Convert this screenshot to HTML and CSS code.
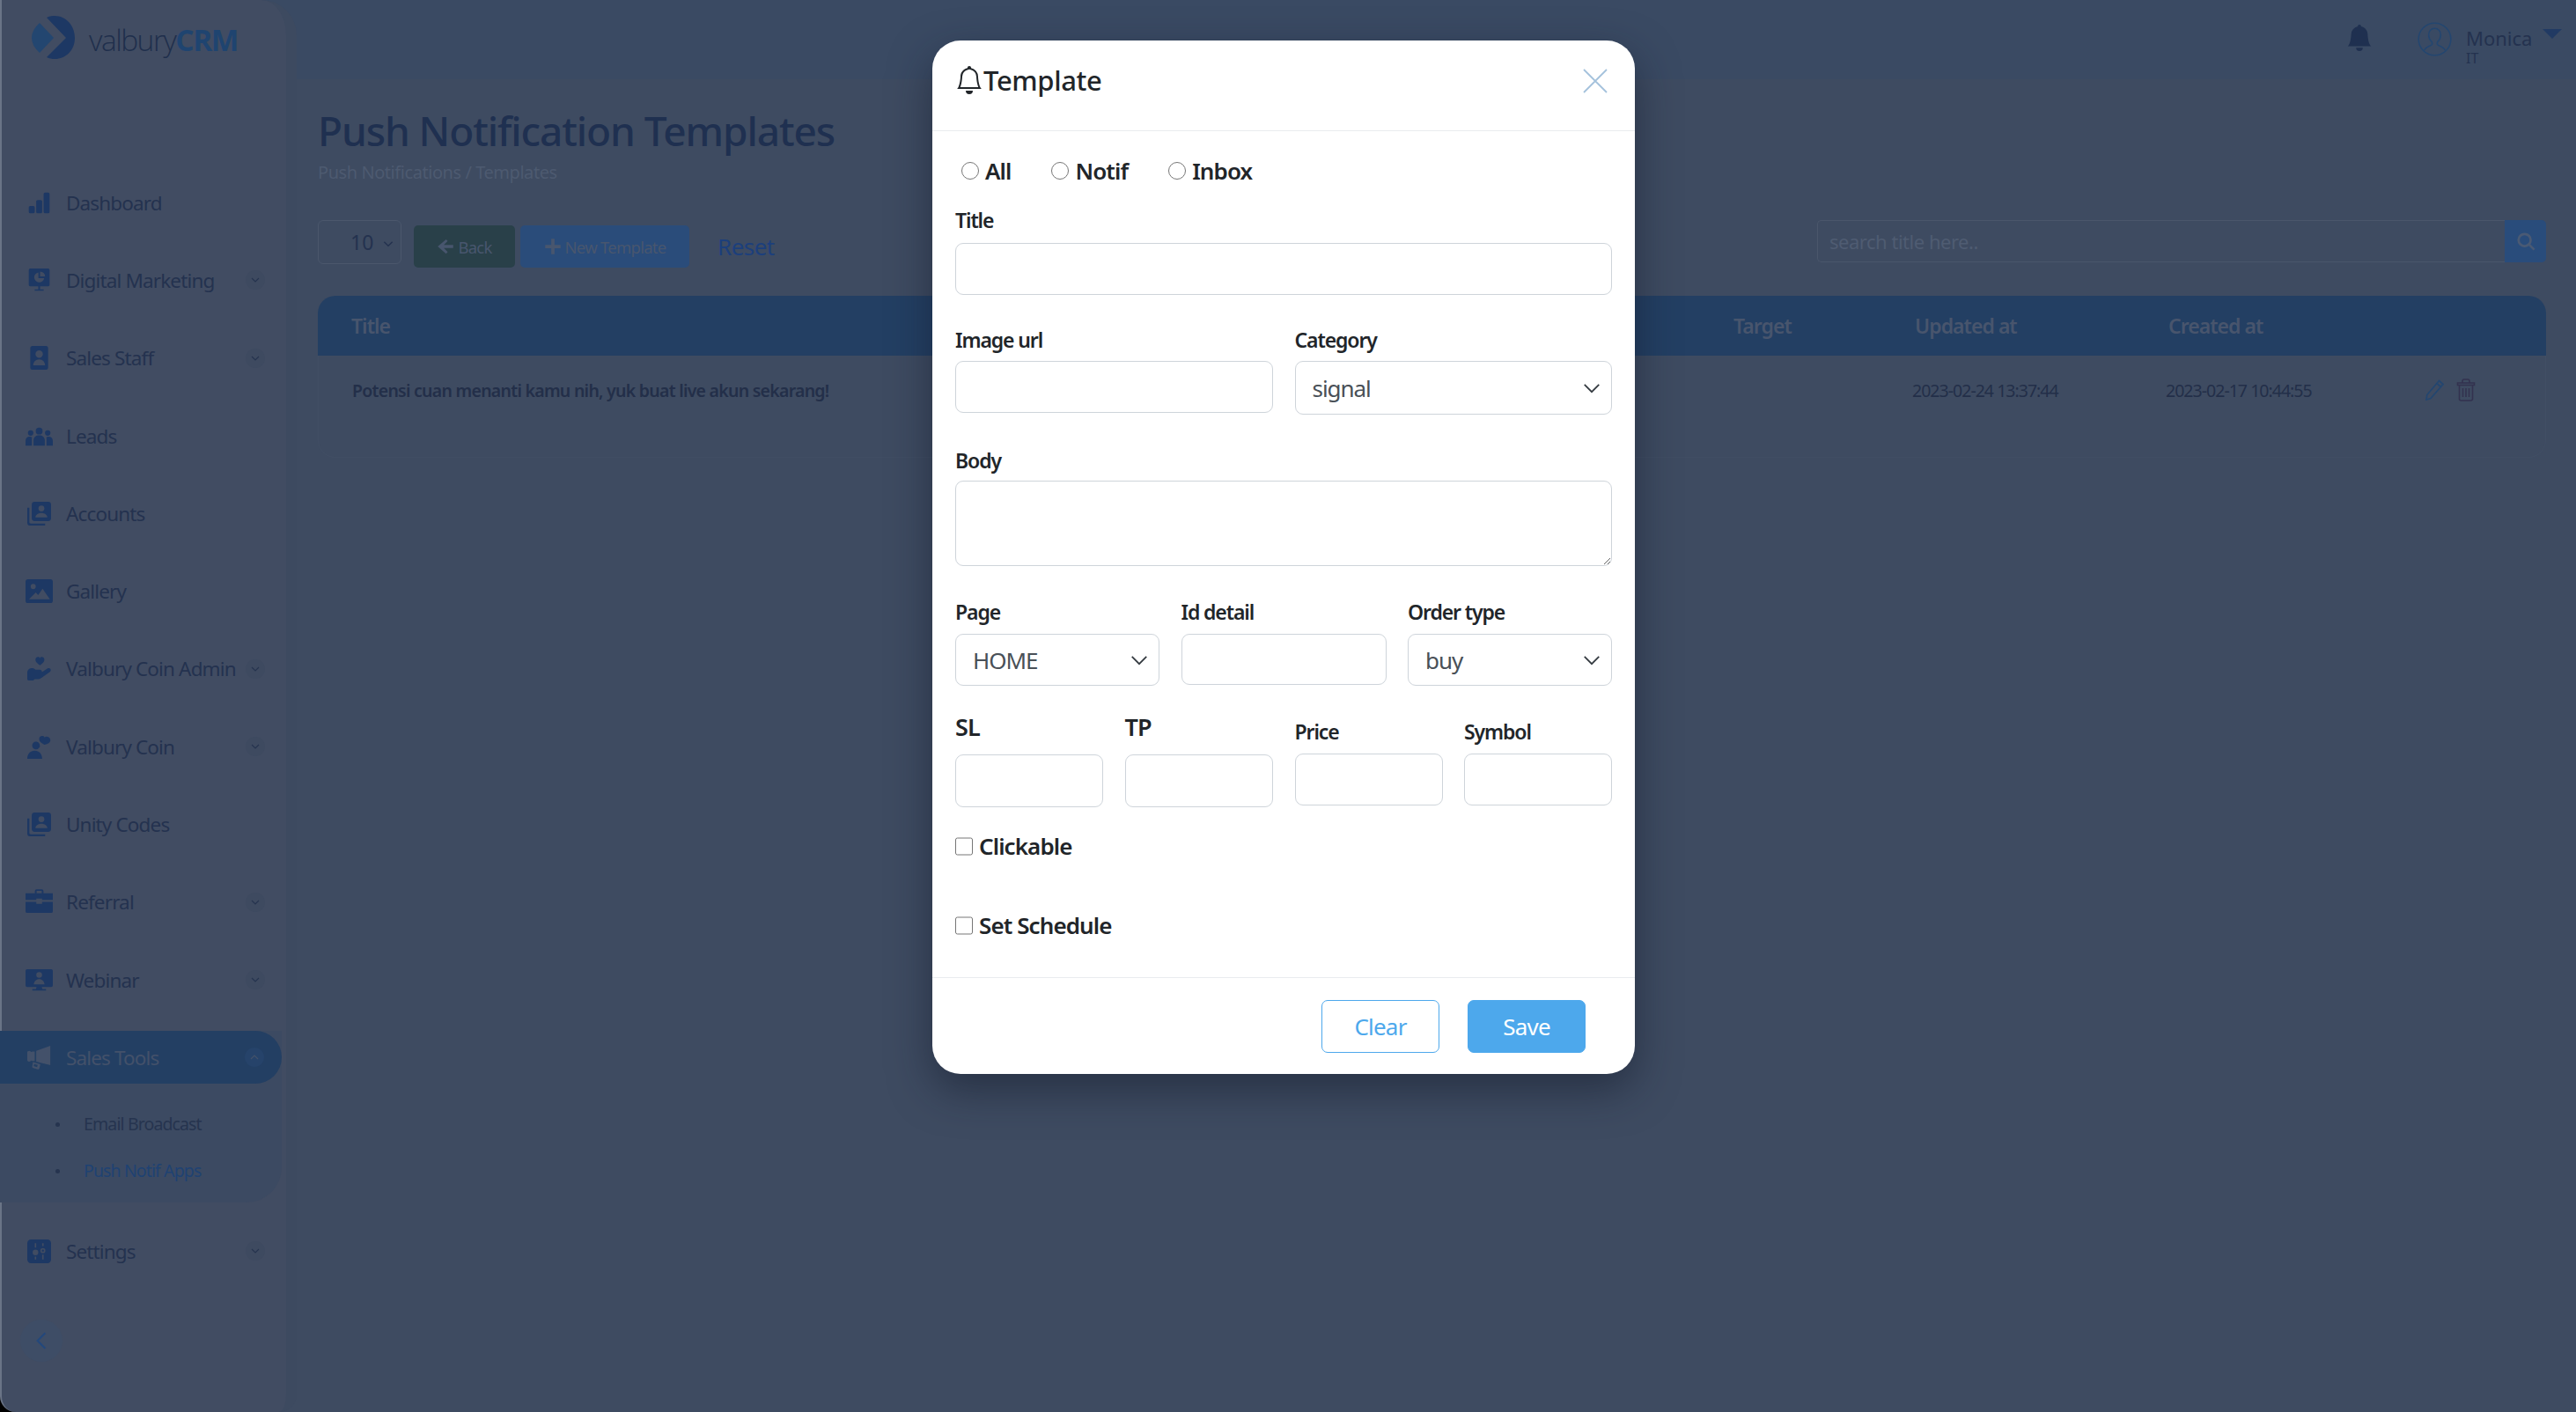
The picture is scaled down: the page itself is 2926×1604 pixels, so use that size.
FILE: index.html
```html
<!DOCTYPE html>
<html lang="en">
<head>
<meta charset="utf-8">
<title>Push Notification Templates</title>
<link rel="stylesheet" href="styles.css">
</head>
<body>
<div class="app">
  <aside class="sidebar">
    <div class="logo">
      <svg class="logo-mark" viewBox="0 0 50 49"><path class="logo-a" d="M10 8 L26 25 L10 42 Q1 34 1 25 Q1 16 10 8Z"/><path class="logo-b" d="M18 2 C22 0 25 0 27 0 C40 0 50 11 50 25 C50 39 40 49 27 49 C24 49 21 48.500 18 47 L40 25Z"/></svg>
      <span class="logo-text">valbury<b>CRM</b></span>
    </div>
    <nav class="nav">
      <a class="nav-item"><svg class="nav-icon" viewBox="0 0 16 16"><path d="M1 11a1 1 0 0 1 1-1h2a1 1 0 0 1 1 1v3a1 1 0 0 1-1 1H2a1 1 0 0 1-1-1v-3zm5-4a1 1 0 0 1 1-1h2a1 1 0 0 1 1 1v7a1 1 0 0 1-1 1H7a1 1 0 0 1-1-1V7zm5-5a1 1 0 0 1 1-1h2a1 1 0 0 1 1 1v12a1 1 0 0 1-1 1h-2a1 1 0 0 1-1-1V2z"/></svg><span>Dashboard</span></a>
      <a class="nav-item"><svg class="nav-icon" viewBox="0 0 16 16"><path fill-rule="evenodd" d="M2 0h12a1 1 0 0 1 1 1v10a1 1 0 0 1-1 1H8.600v2H11v1H5v-1h2.400v-2H2a1 1 0 0 1-1-1V1a1 1 0 0 1 1-1zm5.500 2.600a3.400 3.400 0 1 0 3.900 3.900H7.500zM8.600 2v3.400H12A3.400 3.400 0 0 0 8.600 2z"/></svg><span>Digital Marketing</span><i class="chev"><svg viewBox="0 0 12 12"><path d="M2 4l4 4 4-4"/></svg></i></a>
      <a class="nav-item"><svg class="nav-icon" viewBox="0 0 16 16"><path fill-rule="evenodd" d="M3.500 0h9A1.500 1.500 0 0 1 14 1.500v13a1.500 1.500 0 0 1-1.500 1.500h-9A1.500 1.500 0 0 1 2 14.500v-13A1.500 1.500 0 0 1 3.500 0zM8 3a2.500 2.500 0 1 0 0 5 2.500 2.500 0 0 0 0-5zM4 13h8c0-2-1.500-4-4-4s-4 2-4 4z"/></svg><span>Sales Staff</span><i class="chev"><svg viewBox="0 0 12 12"><path d="M2 4l4 4 4-4"/></svg></i></a>
      <a class="nav-item"><svg class="nav-icon wide" viewBox="0 0 16 16"><path d="M8 3a2 2 0 1 1 0 4 2 2 0 0 1 0-4zM3 4.500a1.600 1.600 0 1 1 0 3.200 1.600 1.600 0 0 1 0-3.200zm10 0a1.600 1.600 0 1 1 0 3.200 1.600 1.600 0 0 1 0-3.200zM4.700 13.500V10.500c0-2 1.500-3 3.300-3s3.300 1 3.300 3v3zM0 13.500v-2.700c0-1.500 1-2.500 2.500-2.500.6 0 1 .1 1.300.3-.1.400-.1.900-.1 1.400v3.500zm16 0v-2.700c0-1.500-1-2.500-2.500-2.500-.6 0-1 .1-1.300.3.1.400.1.900.1 1.400v3.500z"/></svg><span>Leads</span></a>
      <a class="nav-item"><svg class="nav-icon" viewBox="0 0 16 16"><path fill-rule="evenodd" d="M5 0h9a2 2 0 0 1 2 2v9a2 2 0 0 1-2 2H5a2 2 0 0 1-2-2V2a2 2 0 0 1 2-2zm4.500 2.500a2 2 0 1 0 0 4 2 2 0 0 0 0-4zM5.500 10.500h8c0-1.700-1.700-3-4-3s-4 1.300-4 3zM0 4h1.400v9.600c0 .6.400 1 1 1H12V16H2a2 2 0 0 1-2-2z"/></svg><span>Accounts</span></a>
      <a class="nav-item"><svg class="nav-icon wide" viewBox="0 0 16 16"><path fill-rule="evenodd" d="M1.500 1h13A1.500 1.500 0 0 1 16 2.500v11a1.500 1.500 0 0 1-1.500 1.500h-13A1.500 1.500 0 0 1 0 13.500v-11A1.500 1.500 0 0 1 1.500 1zM4.500 3.800a1.500 1.500 0 1 0 0 3 1.500 1.500 0 0 0 0-3zM2 12.800h12.300L10 6.600 7.400 10.300 6 8.800z"/></svg><span>Gallery</span></a>
      <a class="nav-item"><svg class="nav-icon" viewBox="0 0 16 16"><path d="M8.500 5.800C6.800 4.500 5.500 3.500 5.500 2.100 5.500.9 6.400.2 7.200.2c.6 0 1 .3 1.300.8.300-.5.700-.8 1.300-.8.800 0 1.700.7 1.700 1.900 0 1.400-1.300 2.400-3 3.700zM1 16c-.6 0-1-.4-1-1v-4.300C0 9 1.300 7.700 3 7.700c1.200 0 1.800.4 2.500 1.100h2.800c1 0 1.600.7 1.600 1.500l3.800-2.400c.7-.4 1.500-.2 1.900.4.400.6.200 1.400-.4 1.900L9.800 14c-1 .8-2 1.100-3.300 1.100H5l-1 .9z"/></svg><span>Valbury Coin Admin</span><i class="chev"><svg viewBox="0 0 12 12"><path d="M2 4l4 4 4-4"/></svg></i></a>
      <a class="nav-item"><svg class="nav-icon" viewBox="0 0 16 16"><path d="M11.500 6.500C9 5.300 7.800 4 8 2.400 8.100 1 9.400.3 10.500.6c.5.100.9.500 1.100 1 .5-.4 1-.6 1.600-.5 1.200.1 2.500 1.100 2.300 2.700-.2 1.300-1.500 2.200-4 2.700zM5 9.500a2.600 2.600 0 1 1 3.200-3.600 2.600 2.600 0 0 1-3.200 3.600zM0 16c0-3.200 2-5.500 5-5.500s5 2.300 5 5.500z"/></svg><span>Valbury Coin</span><i class="chev"><svg viewBox="0 0 12 12"><path d="M2 4l4 4 4-4"/></svg></i></a>
      <a class="nav-item"><svg class="nav-icon" viewBox="0 0 16 16"><path fill-rule="evenodd" d="M5 0h9a2 2 0 0 1 2 2v9a2 2 0 0 1-2 2H5a2 2 0 0 1-2-2V2a2 2 0 0 1 2-2zm4.500 2.500a2 2 0 1 0 0 4 2 2 0 0 0 0-4zM5.500 10.500h8c0-1.700-1.700-3-4-3s-4 1.300-4 3zM0 4h1.400v9.600c0 .6.400 1 1 1H12V16H2a2 2 0 0 1-2-2z"/></svg><span>Unity Codes</span></a>
      <a class="nav-item"><svg class="nav-icon wide" viewBox="0 0 16 16"><path d="M5.500 1.500A1 1 0 0 1 6.500.6h3a1 1 0 0 1 1 .9V3H16v3.800H9.700V6H6.300v.8H0V3h5.500zM6.500 1.600V3h3V1.600zM0 8h6.300v1.200h3.400V8H16v5.500a1 1 0 0 1-1 1H1a1 1 0 0 1-1-1z"/></svg><span>Referral</span><i class="chev"><svg viewBox="0 0 12 12"><path d="M2 4l4 4 4-4"/></svg></i></a>
      <a class="nav-item"><svg class="nav-icon wide" viewBox="0 -1 16 16"><path fill-rule="evenodd" d="M1 .5h14a1 1 0 0 1 1 1V10a1 1 0 0 1-1 1H9.500l.4 1.200H12V13H4v-.8h2.100l.4-1.200H1a1 1 0 0 1-1-1V1.500a1 1 0 0 1 1-1zm7 1.700a1.700 1.700 0 1 0 0 3.400 1.700 1.700 0 0 0 0-3.400zM4.800 9.500h6.400C11 7.600 9.700 6.300 8 6.300S5 7.600 4.800 9.500z"/></svg><span>Webinar</span><i class="chev"><svg viewBox="0 0 12 12"><path d="M2 4l4 4 4-4"/></svg></i></a>
      <div class="nav-group">
        <a class="nav-active"><svg class="nav-icon" viewBox="0 0 16 16"><path d="M15.500 0v13L6 10.600V3.400zM5 3.800v6.400H3.500a2.200 2.200 0 0 1-1-.3A1.300 1.300 0 0 1 0 8.200V5.800a1.300 1.300 0 0 1 2.500-1.700 2.200 2.200 0 0 1 1-.3zM3.800 11l5 1.400-.7 2.800c-.1.500-.6.800-1.100.6l-3-.8c-.5-.1-.8-.6-.7-1.100zm.9 1.300l-.4 1.400 2.300.6.4-1.400z"/></svg><span>Sales Tools</span><i class="chev"><svg viewBox="0 0 12 12"><path d="M2 8l4-4 4 4"/></svg></i></a>
        <ul class="subnav">
          <li>Email Broadcast</li>
          <li class="current">Push Notif Apps</li>
        </ul>
      </div>
      <a class="nav-item"><svg class="nav-icon" viewBox="0 0 16 16"><path fill-rule="evenodd" d="M2.500 0h11A2.500 2.500 0 0 1 16 2.500v11a2.500 2.500 0 0 1-2.500 2.500h-11A2.500 2.500 0 0 1 0 13.500v-11A2.500 2.500 0 0 1 2.500 0zM5 2.500v3h1v-3zM10 2.500v2h1v-2zM5.500 6.800a1.900 1.900 0 1 0 0 3.800 1.900 1.900 0 0 0 0-3.800zm5 -1a1.700 1.700 0 1 0 0 3.400 1.700 1.700 0 0 0 0-3.400zm0 1a.7.700 0 1 1 0 1.400.7.700 0 0 1 0-1.400zM5 11.500v2h1v-2zM10 10.200v3.300h1v-3.300z"/></svg><span>Settings</span><i class="chev"><svg viewBox="0 0 12 12"><path d="M2 4l4 4 4-4"/></svg></i></a>
    </nav>
    <button class="collapse"><svg viewBox="0 0 16 24"><path d="M13 2L3 12l10 10"/></svg></button>
  </aside>

  <main class="main">
    <header class="topbar">
      <svg class="top-bell" viewBox="0 0 16 16"><path d="M8 16a2 2 0 0 0 2-2H6a2 2 0 0 0 2 2zm.995-14.901a1 1 0 1 0-1.990 0A5.002 5.002 0 0 0 3 6c0 1.098-.5 6-2 7h14c-1.500-1-2-5.902-2-7 0-2.420-1.720-4.440-4.005-4.901z"/></svg>
      <svg class="avatar" viewBox="0 0 40 40"><circle cx="20" cy="20" r="18.800"/><path d="M8 33c1-4 6-4.500 8.500-6.500.6-.6.600-2.500 0-3.500-2-2-3.500-5-3.500-8 0-4.500 3-7.500 7-7.500s7 3 7 7.500c0 3-1.500 6-3.500 8-.6 1-.6 2.900 0 3.500C26 28.500 31 29 32 33"/></svg>
      <div class="user"><span class="user-name">Monica</span><span class="user-role">IT</span></div>
      <i class="caret"></i>
    </header>
    <section class="content">
      <h1 class="page-title">Push Notification Templates</h1>
      <p class="crumb">Push Notifications / Templates</p>
      <div class="toolbar">
        <div class="per-page"><span>10</span><svg viewBox="0 0 12 12"><path d="M2 4l4 4 4-4"/></svg></div>
        <a class="tbtn back"><svg viewBox="0 0 16 16"><path d="M8.500 1.500L10 3 6.500 6.600H15v2.800H6.500L10 13l-1.500 1.500L1 8z"/></svg>Back</a>
        <a class="tbtn new"><svg viewBox="0 0 16 16"><path d="M6.500 1h3v5.500H15v3H9.500V15h-3V9.500H1v-3h5.500z"/></svg>New Template</a>
        <a class="reset">Reset</a>
        <div class="search"><span class="search-input">search title here..</span><span class="search-btn"><svg viewBox="0 0 16 16"><circle cx="7" cy="7" r="5"/><path d="M11 11l4 4"/></svg></span></div>
      </div>
      <div class="table">
        <div class="thead">
          <span>Title</span><span>Target</span><span>Updated at</span><span>Created at</span>
        </div>
        <div class="trow">
          <b>Potensi cuan menanti kamu nih, yuk buat live akun sekarang!</b><span></span>
          <span class="date">2023-02-24 13:37:44</span><span class="date">2023-02-17 10:44:55</span>
          <span class="actions">
            <svg class="edit" viewBox="0 0 22 24"><path d="M16.500 1.500L21 5.500 7 21.500l-5 1.500.8-5.500zM14 4.500l4.500 4"/></svg>
            <svg class="trash" viewBox="0 0 22 26"><path d="M3.500 7.500h15V23a2 2 0 0 1-2 2h-11a2 2 0 0 1-2-2zM1.500 5h19v2.500h-19zM7 5V3a2 2 0 0 1 2-2h4a2 2 0 0 1 2 2v2M7.500 11v10M11 11v10M14.500 11v10"/></svg>
          </span>
        </div>
      </div>
    </section>
  </main>

  <div class="modal">
    <div class="modal-head">
      <h2 class="modal-title"><svg class="title-bell" viewBox="0 0 16 16"><path d="M8 16a2 2 0 0 0 2-2H6a2 2 0 0 0 2 2zM8 1.918l-.797.161A4.002 4.002 0 0 0 4 6c0 .628-.134 2.197-.459 3.742-.16.767-.376 1.566-.663 2.258h10.244c-.287-.692-.502-1.490-.663-2.258C12.134 8.197 12 6.628 12 6a4.002 4.002 0 0 0-3.203-3.920L8 1.917zM14.220 12c.223.447.481.801.780 1H1c.299-.199.557-.553.780-1C2.680 10.200 3 6.880 3 6c0-2.420 1.720-4.440 4.005-4.901a1 1 0 1 1 1.990 0A5.002 5.002 0 0 1 13 6c0 .880.320 4.200 1.220 6z"/></svg>Template</h2>
      <svg class="close" viewBox="0 0 28 28"><path d="M1 1l26 26M27 1L1 27"/></svg>
    </div>
    <form class="modal-body">
      <div class="radios">
        <label class="radio"><input type="radio" name="t">All</label>
        <label class="radio"><input type="radio" name="t">Notif</label>
        <label class="radio"><input type="radio" name="t">Inbox</label>
      </div>
      <div class="field first"><label>Title</label><input class="control" type="text"></div>
      <div class="two">
        <div class="field"><label>Image url</label><input class="control" type="text"></div>
        <div class="field"><label>Category</label><select class="control sel"><option>signal</option></select></div>
      </div>
      <div class="field"><label>Body</label><textarea class="control area"></textarea></div>
      <div class="three">
        <div class="field"><label>Page</label><select class="control sel"><option>HOME</option></select></div>
        <div class="field"><label>Id detail</label><input class="control" type="text"></div>
        <div class="field"><label>Order type</label><select class="control sel"><option>buy</option></select></div>
      </div>
      <div class="two last">
        <div class="four">
          <div class="field big"><label>SL</label><input class="control" type="text"></div>
          <div class="field big"><label>TP</label><input class="control" type="text"></div>
        </div>
        <div class="four alt">
          <div class="field"><label>Price</label><input class="control" type="text"></div>
          <div class="field"><label>Symbol</label><input class="control" type="text"></div>
        </div>
      </div>
      <label class="check one"><input type="checkbox">Clickable</label>
      <label class="check two-c"><input type="checkbox">Set Schedule</label>
    </form>
    <div class="modal-foot">
      <button class="btn ghost">Clear</button>
      <button class="btn solid">Save</button>
    </div>
  </div>
</div>
</body>
</html>
```
FILE: styles.css
```css
* { box-sizing: border-box; }
html, body { margin: 0; height: 100%; }
body { background: #000; font-family: "Noto Sans", sans-serif; color: #232f49; overflow: hidden; }
.app { display: flex; width: 2926px; height: 1604px; position: relative; }

/* sidebar */
.sidebar {
  width: 337px; flex: none; height: 1604px; position: relative; z-index: 1;
  background: #414c62; border-left: 2px solid #6a7486; border-right: 12px solid #3d4a60;
  border-radius: 0 40px 20px 18px;
  display: flex; flex-direction: column;
}
.logo { height: 186px; padding: 18px 0 0 33px; display: flex; align-items: flex-start; }
.logo-mark { width: 50px; height: 49px; flex: none; }
.logo-a { fill: #234670; }
.logo-b { fill: #1d3864; }
.logo-text { margin: 0 0 0 16px; font-family: "Open Sans", sans-serif; font-weight: 300; font-size: 33.500px; line-height: 54px; letter-spacing: -.045em; color: #1f2f4c; }
.logo-text b { color: #1f4470; font-weight: 700; letter-spacing: -.045em; }
.nav-item { height: 88.3px; display: flex; align-items: center; padding-left: 24px; color: #24324f; font-size: 22.500px; letter-spacing: -.038em; }
.nav-icon { width: 27px; height: 27px; fill: #1d3864; flex: none; margin: 0 17px 0 5px; }
.nav-icon.wide { width: 31px; height: 31px; margin: 0 15px 0 3px; }
.chev { margin-left: auto; margin-right: 24px; width: 22px; height: 22px; border-radius: 50%; background: #3e4a60; display: flex; align-items: center; justify-content: center; flex: none; }
.chev svg { width: 12px; height: 12px; fill: none; stroke: #26344f; stroke-width: 1.200; }
.nav-group { margin: 14px 0 11px -2px; width: 320px; height: 195px; background: #3c4a62; border-radius: 0 0 40px 0; }
.nav-active { height: 60px; background: #233f63; border-radius: 0 30px 30px 0; display: flex; align-items: center; padding-left: 26px; color: #43516a; font-size: 22.500px; letter-spacing: -.038em; }
.nav-active .nav-icon { fill: #43516a; }
.nav-active .chev { background: #26436a; margin-right: 20px; }
.nav-active .chev svg { stroke: #43516a; }
.subnav { list-style: none; margin: 0; padding: 24px 0 0 63px; font-size: 19.500px; letter-spacing: -.045em; color: #26344f; }
.subnav li { height: 53px; line-height: 44px; position: relative; padding-left: 32px; }
.subnav li::before { content: ""; position: absolute; left: 0; top: 20px; width: 5px; height: 5px; border-radius: 50%; background: #26344f; }
.subnav .current { color: #1f4272; }
.collapse { position: absolute; left: 21px; bottom: 57px; width: 48px; height: 48px; border-radius: 50%; border: 0; background: #3e4d66; display: flex; align-items: center; justify-content: center; padding: 0; }
.collapse svg { width: 14px; height: 24px; fill: none; stroke: #23487c; stroke-width: 2.400; }

/* main */
.main { flex: 1; margin-left: -40px; padding-left: 40px; background: #3e4b61; min-width: 0; }
.topbar { height: 90px; margin-left: -40px; padding-right: 16px; background: #3a4a63; display: flex; align-items: flex-start; }
.top-bell { width: 30px; height: 30px; fill: #1f3050; margin: 28px 0 0 auto; }
.avatar { width: 39px; height: 39px; margin: 25px 0 0 51px; fill: none; stroke: #234670; stroke-width: 1.600; }
.user { display: flex; flex-direction: column; margin: 29px 0 0 16px; color: #24324f; font-size: 22px; width: 71px; }
.user-name { line-height: 28px; }
.user-role { font-size: 16px; line-height: 18px; }
.caret { width: 0; height: 0; margin: 33px 0 0 16px; border-left: 11px solid transparent; border-right: 11px solid transparent; border-top: 11px solid #213a63; }
.content { padding: 28px 34px 0 24px; }
.page-title { margin: 0; font-size: 46px; line-height: 60px; font-weight: 500; color: #1f3050; letter-spacing: -.024em; }
.crumb { margin: 4px 0 0; font-size: 20px; line-height: 28px; color: #4d5a70; letter-spacing: -.022em; }
.toolbar { display: flex; align-items: flex-start; margin-top: 40px; height: 54px; }
.per-page { width: 95px; height: 50px; border: 1px solid #4b576c; border-radius: 6px; display: flex; align-items: center; padding-left: 36px; font-size: 23px; color: #24324f; }
.per-page svg { width: 14px; height: 14px; margin: 3px 0 0 10px; fill: none; stroke: #24324f; stroke-width: 1.200; }
.tbtn { height: 48px; margin-top: 6px; border-radius: 5px; display: flex; align-items: center; justify-content: center; font-size: 18.500px; letter-spacing: -.04em; color: #48566e; }
.tbtn svg { width: 20px; height: 20px; fill: #48566e; margin-right: 4px; }
.back { width: 115px; margin-left: 14px; background: #294049; }
.new { width: 192px; margin-left: 6px; background: #2a4c7a; }
.reset { margin: 6px 0 0 32px; font-size: 26px; line-height: 48px; color: #1c3f7c; letter-spacing: -.02em; }
.search { margin-left: auto; width: 828px; height: 48px; display: flex; }
.search-input { flex: 1; border: 1px solid #4a566b; border-right: 0; border-radius: 5px 0 0 5px; padding-left: 13px; font-size: 22px; line-height: 46px; color: #4f5c72; letter-spacing: -.022em; }
.search-btn { width: 47px; background: #294c7b; border-radius: 0 5px 5px 0; display: flex; align-items: center; justify-content: center; }
.search-btn svg { width: 22px; height: 24px; fill: none; stroke: #4a5a74; stroke-width: 2; }
.table { margin-top: 32px; height: 184px; border-radius: 20px; border: 1px solid #414e64; border-top: 0; }
.thead, .trow { display: grid; grid-template-columns: 1570px 206px 288px 290px 1fr; padding-left: 38px; }
.thead { height: 68px; margin: 0 -1px; background: #233f63; border-radius: 20px 20px 0 0; align-items: center; font-size: 23px; font-weight: 600; color: #48556d; letter-spacing: -.042em; }
.trow { height: 78px; align-items: center; font-size: 19.500px; color: #232f49; }
.trow b { font-weight: 600; white-space: nowrap; letter-spacing: -.038em; }
.date { margin-left: -4px; white-space: nowrap; letter-spacing: -.05em; }
.actions { display: flex; align-items: center; gap: 14px; }
.edit { width: 22px; height: 24px; fill: none; stroke: #234670; stroke-width: 1.700; }
.trash { width: 22px; height: 26px; fill: none; stroke: #33324f; stroke-width: 1.600; }

/* modal */
.modal { position: absolute; z-index: 5; left: 1059px; top: 46px; width: 798px; height: 1174px; background: #fff; border-radius: 32px; box-shadow: 0 18px 48px rgba(20, 28, 44, .55); display: flex; flex-direction: column; color: #212529; }
.modal-head { height: 103px; flex: none; border-bottom: 1px solid #e9ecef; display: flex; align-items: flex-start; padding: 27px 31px 0 26px; justify-content: space-between; }
.modal-title { margin: 0; display: flex; align-items: center; font-size: 31px; line-height: 34px; font-weight: 500; height: 36px; letter-spacing: -.012em; }
.title-bell { width: 32px; height: 32px; fill: #212529; margin: 0; }
.close { width: 28px; height: 28px; margin-top: 5px; fill: none; stroke: #a4c2dc; stroke-width: 1.800; }
.modal-body { flex: 1; padding: 30px 26px 0; font-size: 23px; }
.radios { display: flex; height: 30px; align-items: center; padding-left: 7px; }
.radio { display: flex; align-items: center; font-size: 26px; font-weight: 600; margin-right: 46px; line-height: 30px; letter-spacing: -.035em; }
.radio input { width: 20px; height: 20px; margin: 0 7px 0 0; }
.field label { display: block; font-size: 23px; font-weight: 600; line-height: 32px; margin-bottom: 7px; letter-spacing: -.048em; }
.field { margin-top: 36px; }
.field.first { margin-top: 25px; }
.field.first label { margin-bottom: 10px; }
.two .field label { margin-bottom: 8px; }
.two { margin-top: -1px; }
.control { display: block; width: 100%; height: 59px; border: 1px solid #ced4da; border-radius: 9px; background: #fff; font-family: inherit; font-size: 26px; letter-spacing: -.04em; color: #495057; padding: 0 19px; outline: 0; }
.sel { height: 61px; appearance: none; -webkit-appearance: none; background-image: url("data:image/svg+xml,%3Csvg xmlns='http://www.w3.org/2000/svg' viewBox='0 0 16 16'%3E%3Cpath fill='none' stroke='%23343a40' stroke-width='1.300' d='M2 5l6 6 6-6'/%3E%3C/svg%3E"); background-repeat: no-repeat; background-position: right 11px center; background-size: 22px 22px; }
.area { height: 97px; }
.two { display: grid; grid-template-columns: 360.500px 360.500px; column-gap: 25px; }
.three { display: grid; grid-template-columns: 232px 233px 232px; column-gap: 24.500px; }
.three .field label { margin-bottom: 9px; }
.three .field:nth-child(2) .control { height: 58px; }
.three .sel { height: 59px; }
.two.last { margin-top: 0; }
.four { display: grid; grid-template-columns: 168px 168px; column-gap: 24.500px; }
.two.last .field { margin-top: 29px; }
.field.big label { font-size: 27px; line-height: 36px; margin-bottom: 13px; letter-spacing: -.03em; }
.field.big .control { height: 60px; }
.alt .field { padding-top: 7px; }
.alt .field label { margin-bottom: 9px; }
.check { display: flex; align-items: center; font-size: 26px; font-weight: 600; height: 36px; letter-spacing: -.035em; }
.check input { width: 20px; height: 21px; margin: 0 7px 0 0; }
.check.one { margin-top: 26px; }
.check.two-c { margin-top: 54px; }
.modal-foot { height: 110px; flex: none; border-top: 1px solid #e9ecef; display: flex; justify-content: flex-end; align-items: flex-start; padding: 25px 56px 0 0; gap: 32px; }
.btn { width: 134px; height: 60px; border-radius: 7px; font-family: inherit; font-size: 26px; letter-spacing: -.03em; }
.ghost { background: #fff; border: 1px solid #4da8ec; color: #4da8ec; }
.solid { background: #4da8ec; border: 1px solid #4da8ec; color: #fff; }
```
